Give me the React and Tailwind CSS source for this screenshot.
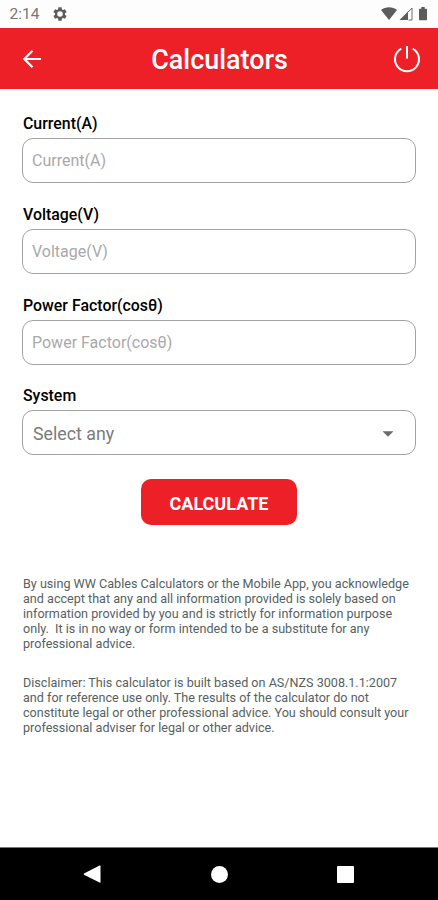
import React from "react";

const FIELDS = [
  { label: "Current(A)", gap: "mb-[22px]" },
  { label: "Voltage(V)", gap: "mb-[22px]" },
  { label: "Power Factor(cosθ)", gap: "mb-[21px]" },
];

function StatusBar() {
  return (
    <div className="flex h-[28px] shrink-0 items-center justify-between bg-[#fdfdfd] pr-[7px] pl-[9.5px] text-[#5c5c5c]">
      <div className="flex items-center gap-[12.5px]">
        <span className="w-[30px] pt-[2px] text-[15.5px] leading-none whitespace-nowrap text-[#777]">2:14</span>
        <svg className="size-[16px]" viewBox="0 0 24 24" fill="currentColor">
          <path
            fillRule="evenodd"
            d="M19.43 12.98c.04-.32.07-.64.07-.98s-.03-.66-.07-.98l2.11-1.65c.19-.15.24-.42.12-.64l-2-3.46c-.12-.22-.39-.3-.61-.22l-2.49 1c-.52-.4-1.08-.73-1.69-.98l-.38-2.65A.49.49 0 0 0 14 2h-4c-.25 0-.46.18-.49.42l-.38 2.65c-.61.25-1.17.59-1.69.98l-2.49-1c-.23-.09-.49 0-.61.22l-2 3.46c-.13.22-.07.49.12.64l2.11 1.65c-.04.32-.07.65-.07.98s.03.66.07.98l-2.11 1.65c-.19.15-.24.42-.12.64l2 3.46c.12.22.39.3.61.22l2.49-1c.52.4 1.08.73 1.69.98l.38 2.65c.03.24.24.42.49.42h4c.25 0 .46-.18.49-.42l.38-2.65c.61-.25 1.17-.59 1.69-.98l2.49 1c.23.09.49 0 .61-.22l2-3.46c.12-.22.07-.49-.12-.64l-2.11-1.65zM12 16.2a4.200 4.200 0 1 1 0-8.400 4.200 4.200 0 0 1 0 8.400z"
          />
        </svg>
      </div>
      <svg className="h-[16px] w-[50px]" viewBox="0 0 50 16" fill="currentColor">
        <path d="M0 4C4.500 0.300 11.500 0.300 16 4L8 14Z" />
        <path d="M27 14H18.500L27 5.500Z" />
        <path d="M27.500 14H31V2L26.500 6.500" fill="none" stroke="currentColor" strokeWidth="0.900" />
        <path d="M38 3.400Q38 2.700 38.700 2.700H40.300V1H43.700V2.700H45.300Q46 2.700 46 3.400V13.600Q46 14.300 45.300 14.300H38.700Q38 14.300 38 13.600Z" />
      </svg>
    </div>
  );
}

function Header() {
  return (
    <header className="flex h-[61px] shrink-0 items-center justify-between bg-[#ed2027] pr-[17px] pl-[22px] text-white">
      <svg className="h-[20px] w-[24px]" viewBox="0 0 24 20" fill="none" stroke="currentColor" strokeWidth="2.2">
        <path d="M19 10H3M10.500 1.800L2.300 10L10.500 18.200" />
      </svg>
      <h1 className="pt-[3px] text-[26.9px] leading-none font-medium">Calculators</h1>
      <svg className="size-[28px]" viewBox="0 0 28 28" fill="none" stroke="currentColor" strokeWidth="2">
        <path d="M8.300 3.600A12 12 0 1 0 19.700 3.600M14 1V13.500" />
      </svg>
    </header>
  );
}

export default function App() {
  return (
    <div className="flex h-[900px] w-[438px] flex-col bg-white font-['Roboto',sans-serif]">
      <StatusBar />
      <Header />
      <main className="flex flex-1 flex-col px-[22px] pt-[25px]">
        {FIELDS.map(({ label, gap }) => (
          <div key={label} className={gap}>
            <label className="block h-[24px] pl-px text-[15.9px] leading-[20px] font-medium text-black">{label}</label>
            <input
              className="block h-[45px] w-[394px] rounded-[11px] border border-[#a3a3a3] px-[9px] text-base placeholder:text-[#a9a9a9]"
              placeholder={label}
            />
          </div>
        ))}
        <label className="block h-[24px] pl-px text-[15.9px] leading-[20px] font-medium text-black">System</label>
        <button className="flex h-[45px] w-[394px] items-center justify-between rounded-[11px] border border-[#a3a3a3] pt-[3px] pr-[21px] pl-[10px] text-[17.8px] text-[#7b7b7b]">
          Select any
          <svg className="h-[6px] w-[12px]" viewBox="0 0 12 6" fill="#6b6b6b">
            <path d="M0.500 0.300H11.500L6 5.800Z" />
          </svg>
        </button>
        <button className="mt-[24px] h-[46px] w-[156px] self-center rounded-[10px] bg-[#ed2027] pt-[2px] text-[18px] font-bold text-white">
          CALCULATE
        </button>
        <div className="mt-[51px] pl-px text-[12.6px] leading-[15px] whitespace-pre text-[#56615f]">
          <p>{`By using WW Cables Calculators or the Mobile App, you acknowledge
and accept that any and all information provided is solely based on
information provided by you and is strictly for information purpose
only.  It is in no way or form intended to be a substitute for any
professional advice.`}</p>
          <p className="mt-[24px]">{`Disclaimer: This calculator is built based on AS/NZS 3008.1.1:2007
and for reference use only. The results of the calculator do not
constitute legal or other professional advice. You should consult your
professional adviser for legal or other advice.`}</p>
        </div>
      </main>
      <nav className="flex h-[53px] shrink-0 items-center justify-between border-t border-[#777] bg-black pr-[84px] pl-[83px] text-white">
        <svg className="size-[18px]" viewBox="0 0 18 18" fill="currentColor">
          <path d="M16.500 0.500Q17.500 0.200 17.500 1.200V17Q17.500 18 16.500 17.500L1 9.700Q0.200 9 1 8.500Z" />
        </svg>
        <span className="size-[17px] rounded-full bg-white" />
        <span className="size-[17px] rounded-[1px] bg-white" />
      </nav>
    </div>
  );
}
